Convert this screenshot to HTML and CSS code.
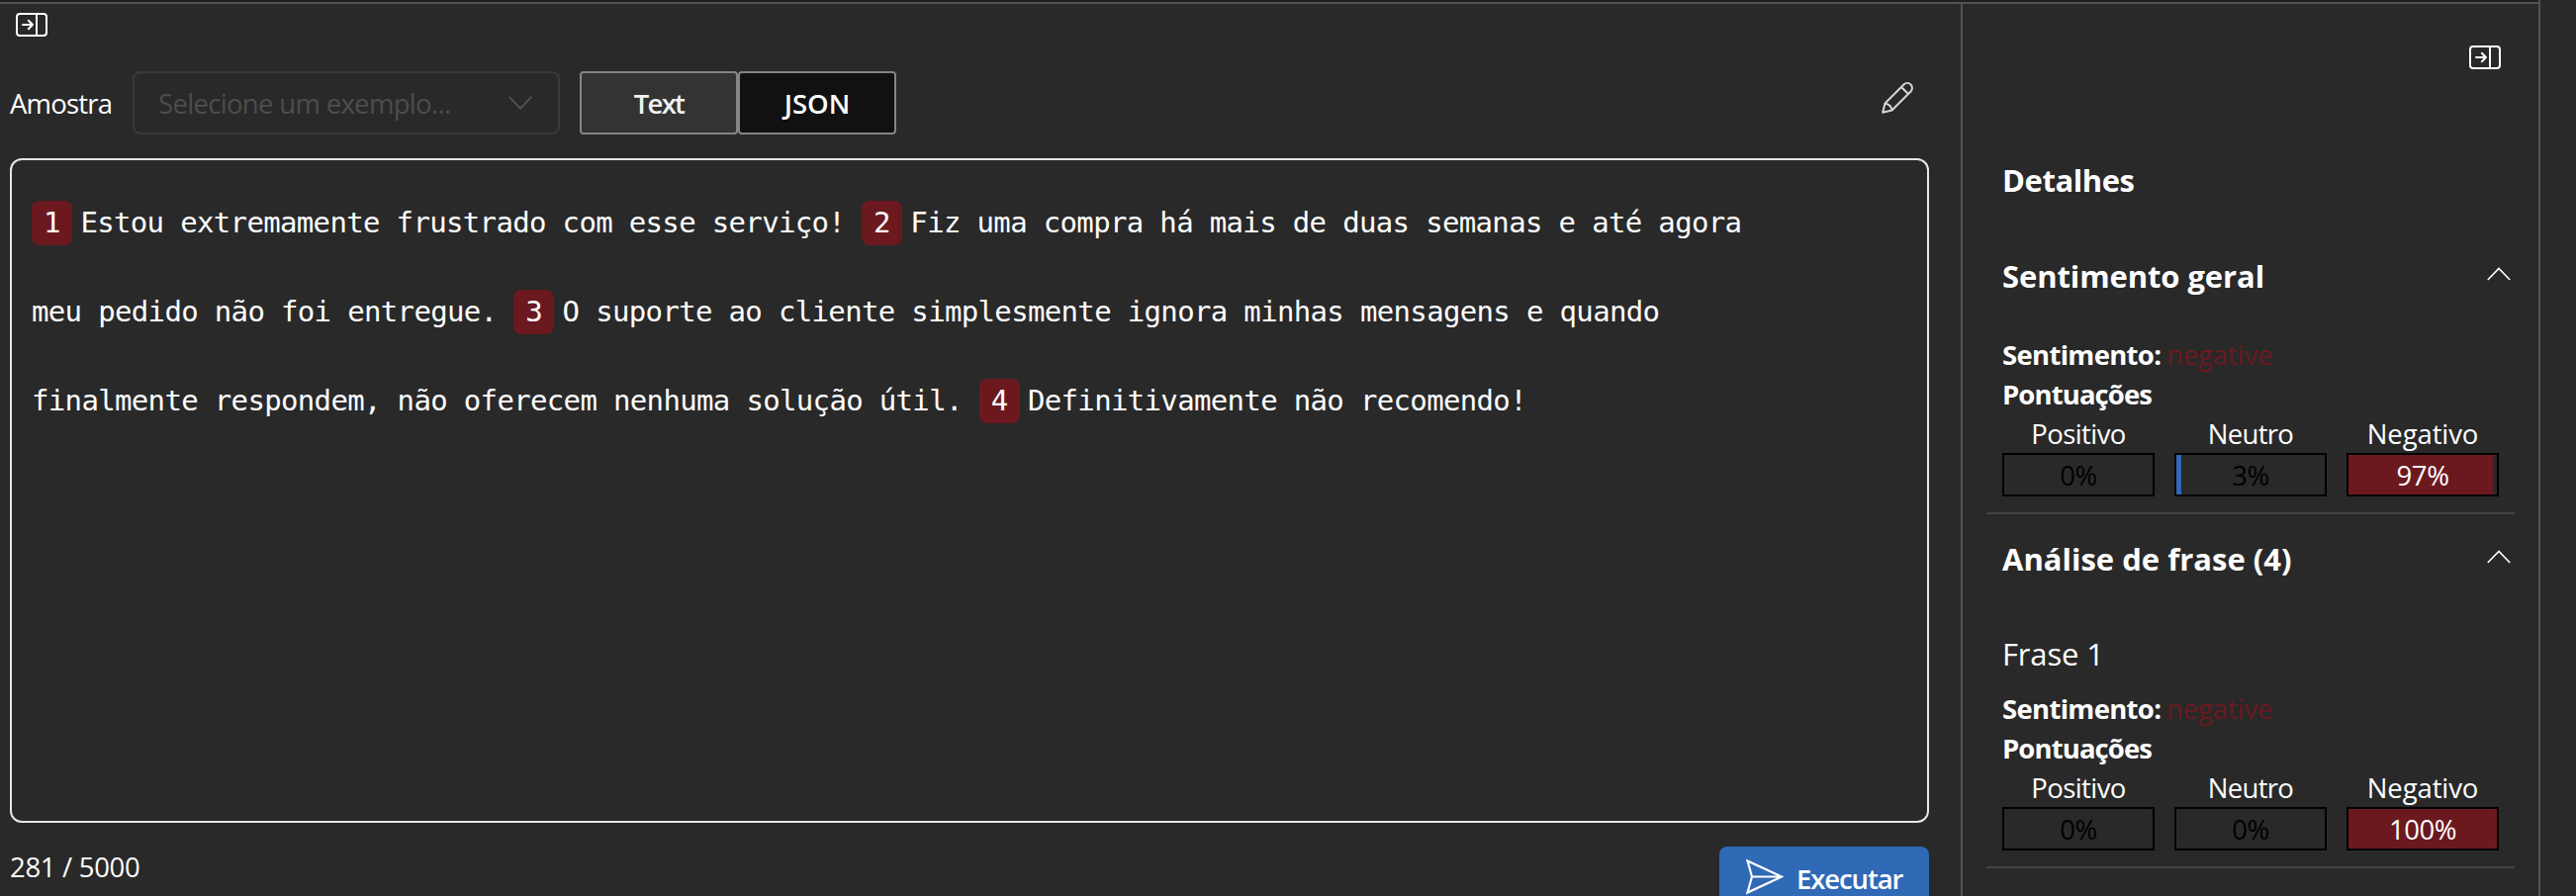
FILE: index.html
```
<!DOCTYPE html>
<html lang="pt-BR">
<head>
<meta charset="utf-8">
<title>Análise de sentimento</title>
<link rel="stylesheet" href="styles.css">
</head>
<body>
<svg class="defs" width="0" height="0">
  <symbol id="panel" viewBox="0 0 32 24"><g fill="none" stroke="#fff" stroke-width="2" stroke-linecap="round" stroke-linejoin="round"><rect x="1" y="1" width="30" height="22" rx="3"/><path d="M21 1v22M7 12h10M12.8 7.8 17 12l-4.200 4.200"/></g></symbol>
  <symbol id="up" viewBox="0 0 24 14"><path d="M.8 13 12 1.500 23.200 13" fill="none" stroke="#fff" stroke-width="1.600"/></symbol>
</svg>
<div class="app">
  <main class="main">
    <svg class="panel-icon"><use href="#panel"/></svg>
    <div class="toolbar">
      <span class="label">Amostra</span>
      <div class="select">
        <span class="placeholder">Selecione um exemplo...</span>
        <svg width="24" height="14" viewBox="0 0 24 14"><path d="M.8 1 12 12.500 23.200 1" fill="none" stroke="#5a5a5a" stroke-width="1.600"/></svg>
      </div>
      <div class="tabs">
        <button class="tab text">Text</button>
        <button class="tab json">JSON</button>
      </div>
      <svg class="pencil" viewBox="0 0 32 32"><g fill="none" stroke="#d6d6d6" stroke-width="2" stroke-linejoin="round"><path d="M1.200 30.800 3.500 21.500 22.500 2.500a4.900 4.900 0 0 1 7 7L10.500 28.500zM20 5l7 7M3.500 21.500q6 1 7 7"/></g></svg>
    </div>
    <div class="editor"><span class="badge">1</span>Estou extremamente frustrado com esse serviço! <span class="badge">2</span>Fiz uma compra há mais de duas semanas e até agora<br>meu pedido não foi entregue. <span class="badge">3</span>O suporte ao cliente simplesmente ignora minhas mensagens e quando<br>finalmente respondem, não oferecem nenhuma solução útil. <span class="badge">4</span>Definitivamente não recomendo!</div>
    <div class="footer">
      <span class="count">281 / 5000</span>
      <button class="run">
        <svg width="38" height="36" viewBox="0 0 38 36"><path d="M1.500 1.500 36 17.500 1.500 33.500 6 17.500zM6 17.500H36" fill="none" stroke="#fff" stroke-width="2.200"/></svg>
        <span class="run-label">Executar</span>
      </button>
    </div>
  </main>
  <aside class="details">
    <svg class="panel-icon"><use href="#panel"/></svg>
    <h2 class="title detalhes">Detalhes</h2>
    <section class="section general">
      <div class="heading"><h2 class="title">Sentimento geral</h2><svg class="chev"><use href="#up"/></svg></div>
      <div class="facts">
        <p class="row"><b class="key">Sentimento:</b><span class="neg">negative</span></p>
        <p class="row"><b class="scores-title">Pontuações</b></p>
        <div class="scores">
          <div class="score"><span class="pos">Positivo</span><div class="bar"><span>0%</span></div></div>
          <div class="score"><span class="neu">Neutro</span><div class="bar blue"><span>3%</span></div></div>
          <div class="score"><span class="ngt">Negativo</span><div class="bar red most"><span>97%</span></div></div>
        </div>
      </div>
    </section>
    <section class="section phrases">
      <div class="heading"><h2 class="title analysis">Análise de frase (4)</h2><svg class="chev"><use href="#up"/></svg></div>
      <h3 class="phrase">Frase 1</h3>
      <div class="facts">
        <p class="row"><b class="key">Sentimento:</b><span class="neg">negative</span></p>
        <p class="row"><b class="scores-title">Pontuações</b></p>
        <div class="scores">
          <div class="score"><span class="pos">Positivo</span><div class="bar"><span>0%</span></div></div>
          <div class="score"><span class="neu">Neutro</span><div class="bar"><span>0%</span></div></div>
          <div class="score"><span class="ngt">Negativo</span><div class="bar red"><span>100%</span></div></div>
        </div>
      </div>
    </section>
  </aside>
  <div class="gutter"></div>
</div>
</body>
</html>
```
FILE: styles.css
```
* { box-sizing: border-box; margin: 0; padding: 0; }
body { background: #292929; color: #fff; font: 27.5px/40px "Open Sans", "Noto Sans", sans-serif; overflow: hidden; }
svg { display: block; flex: none; }
.defs { position: absolute; }
button { font: inherit; color: inherit; }
.app { display: grid; grid-template-columns: 1982px 584px 38px; height: 906px; }
.main, .details { border-top: 2px solid #525252; box-shadow: 0 -2px #1f1f1f; margin-top: 2px; height: 904px; overflow: visible; }
.panel-icon { width: 32px; height: 24px; }

.main { padding: 9px 32px 0 10px; display: flex; flex-direction: column; }
.main .panel-icon { margin-left: 6px; }
.toolbar { display: flex; align-items: center; height: 64px; margin-top: 35px; }
.label { width: 124px; padding-top: 2px; letter-spacing: -.8px; }
.select { width: 432px; height: 64px; border: 2px solid #3a3a3a; border-radius: 8px; display: flex; align-items: center; justify-content: space-between; padding: 0 26px 0 24px; color: #4d4d4d; }
.placeholder { padding-top: 2px; letter-spacing: -.68px; white-space: nowrap; }
.tabs { display: flex; margin-left: 20px; }
.tab { width: 160px; height: 64px; padding-top: 2px; border: 2px solid #858585; border-radius: 4px; font-weight: 600; }
.text { background: #333; letter-spacing: -1.7px; color: #f2f2f2; }
.json { background: #111; }
.pencil { width: 32px; height: 32px; margin: -10px 16px 0 auto; }

.editor { height: 672px; margin-top: 24px; border: 2px solid #e6e6e6; border-radius: 12px; padding: 18px 20px; font: 29px/90px "DejaVu Sans Mono", monospace; letter-spacing: -.66px; white-space: pre; }
.badge { display: inline-block; width: 41px; height: 45px; line-height: 45px; margin-right: 8.4px; border-radius: 8px; background: #6b191f; text-align: center; }
.footer { display: flex; justify-content: space-between; height: 50px; padding-top: 24px; overflow: visible; }
.count { padding-top: 1px; letter-spacing: -.3px; }
.run { width: 212px; height: 64px; border: 0; border-radius: 8px; background: #3069b6; display: flex; align-items: center; gap: 13px; padding-left: 27px; padding-bottom: 2px; font-weight: 600; letter-spacing: -1.1px; }
.run-label { padding-top: 3px; }

.details { border-left: 2px solid #525252; padding: 42px 24px 0; }
.details .panel-icon { margin-left: auto; margin-right: 14px; }
.title { font-size: 31px; line-height: 44px; font-weight: 700; letter-spacing: -.1px; }
.analysis { letter-spacing: 0; }
.detalhes { margin: 90px 0 0 16px; letter-spacing: -.44px; }
.section { border-bottom: 2px solid #424242; padding: 0 0 16px 16px; }
.heading { display: flex; align-items: center; justify-content: space-between; height: 44px; padding-right: 4px; }
.chev { width: 24px; height: 14px; margin-top: -5px; }
.general { margin-top: 53px; }
.facts { margin-top: 38px; }
.row { display: flex; height: 40px; }
.key { letter-spacing: -.69px; width: 166px; }
.scores-title { letter-spacing: -.9px; }
.neg { color: #6b191f; letter-spacing: -.14px; }
.scores { display: flex; gap: 20px; }
.score { width: 154px; text-align: center; }
.score > span { display: block; height: 39px; }
.pos { letter-spacing: -.57px; }
.neu { letter-spacing: -.71px; }
.ngt { letter-spacing: -.12px; }
.bar { height: 44px; border: 2px solid #000; color: #000; line-height: 41px; letter-spacing: -.42px; }
.blue { background: linear-gradient(90deg, #3069b6 5px, transparent 5px) no-repeat; }
.red { background: #6b191f; color: #fff; }
.most { background: linear-gradient(90deg, #6b191f 97.500%, transparent 97.500%) no-repeat; }
.phrases { padding-top: 23px; }
.phrase { margin-top: 52px; font-size: 31px; line-height: 44px; font-weight: 400; letter-spacing: -.15px; }
.phrases .facts { margin-top: 14px; }
.gutter { border-left: 2px solid #525252; height: 906px; }
```
